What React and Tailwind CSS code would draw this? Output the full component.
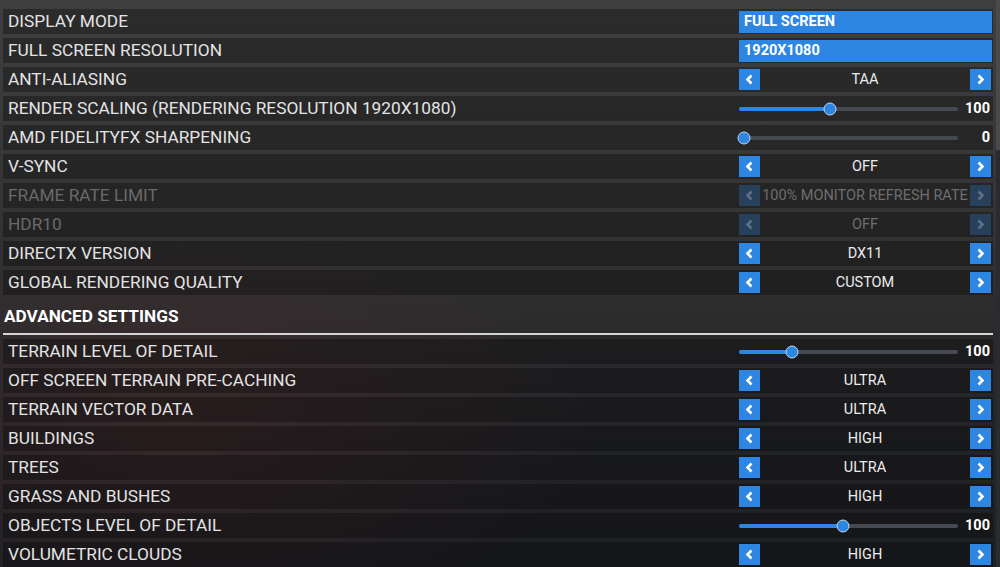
import React from "react";

const FONT = { fontFamily: "Roboto, 'Noto Sans', 'Liberation Sans', sans-serif" };

function Chevron({ dir, dim }) {
  const pts = dir === "left" ? "12.5,6.5 8.5,10.5 12.5,14.5" : "8.5,6.5 12.5,10.5 8.5,14.5";
  return (
    <svg width="21" height="21" viewBox="0 0 21 21">
      <polyline points={pts} fill="none" stroke={dim ? "#5d6f82" : "#ffffff"} strokeWidth="2.6" strokeLinejoin="miter" strokeLinecap="butt" />
    </svg>
  );
}

function ArrowControl({ value, disabled }) {
  const btn = disabled ? "bg-[#27415c]" : "bg-[#2d86e2]";
  return (
    <div className="flex items-center w-[252px] h-[21px] mr-[2px]">
      <div className={`w-[21px] h-[21px] shrink-0 ${btn}`}>
        <Chevron dir="left" dim={disabled} />
      </div>
      <div className={`flex-1 text-center text-[14.5px] leading-[21px] whitespace-nowrap overflow-visible ${disabled ? "text-[#6e6e6e]" : "text-[#ececec]"}`}>
        {value}
      </div>
      <div className={`w-[21px] h-[21px] shrink-0 ${btn}`}>
        <Chevron dir="right" dim={disabled} />
      </div>
    </div>
  );
}

function BoxControl({ value }) {
  return (
    <div className="w-[253px] h-[22px] bg-[#2d86e2] text-white font-bold text-[14.5px] leading-[22px] pl-[5px] mr-[1px]">
      {value}
    </div>
  );
}

function SliderControl({ value, thumb }) {
  return (
    <div className="flex items-center w-[253px] h-[21px] mr-[1px]">
      <div className="relative w-[219px] h-[4px] bg-[#454a52] rounded-full">
        <div className="absolute left-0 top-0 h-[4px] bg-[#2d86e2] rounded-full" style={{ width: thumb }} />
        <div
          className="absolute top-1/2 w-[13px] h-[13px] rounded-full bg-[#2d86e2] border border-[#c6d6e8] -translate-x-1/2 -translate-y-1/2"
          style={{ left: thumb }}
        />
      </div>
      <div className="flex-1 text-right text-white font-bold text-[14.5px] pr-[2px]">{value}</div>
    </div>
  );
}

function Row({ label, type, value, thumb, disabled }) {
  let control = null;
  if (type === "box") control = <BoxControl value={value} />;
  else if (type === "arrow") control = <ArrowControl value={value} disabled={disabled} />;
  else if (type === "slider") control = <SliderControl value={value} thumb={thumb} />;
  return (
    <div className="flex items-center justify-between h-[25px] bg-black/30 pl-[5px]">
      <div className={`text-[17.3px] leading-[25px] whitespace-nowrap ${disabled ? "text-[#6a6a6a]" : "text-[#e3e3e3]"}`}>{label}</div>
      {control}
    </div>
  );
}

const main = [
  { label: "DISPLAY MODE", type: "box", value: "FULL SCREEN" },
  { label: "FULL SCREEN RESOLUTION", type: "box", value: "1920X1080" },
  { label: "ANTI-ALIASING", type: "arrow", value: "TAA" },
  { label: "RENDER SCALING (RENDERING RESOLUTION 1920X1080)", type: "slider", value: "100", thumb: 91 },
  { label: "AMD FIDELITYFX SHARPENING", type: "slider", value: "0", thumb: 5 },
  { label: "V-SYNC", type: "arrow", value: "OFF" },
  { label: "FRAME RATE LIMIT", type: "arrow", value: "100% MONITOR REFRESH RATE", disabled: true },
  { label: "HDR10", type: "arrow", value: "OFF", disabled: true },
  { label: "DIRECTX VERSION", type: "arrow", value: "DX11" },
  { label: "GLOBAL RENDERING QUALITY", type: "arrow", value: "CUSTOM" },
];

const advanced = [
  { label: "TERRAIN LEVEL OF DETAIL", type: "slider", value: "100", thumb: 53 },
  { label: "OFF SCREEN TERRAIN PRE-CACHING", type: "arrow", value: "ULTRA" },
  { label: "TERRAIN VECTOR DATA", type: "arrow", value: "ULTRA" },
  { label: "BUILDINGS", type: "arrow", value: "HIGH" },
  { label: "TREES", type: "arrow", value: "ULTRA" },
  { label: "GRASS AND BUSHES", type: "arrow", value: "HIGH" },
  { label: "OBJECTS LEVEL OF DETAIL", type: "slider", value: "100", thumb: 104 },
  { label: "VOLUMETRIC CLOUDS", type: "arrow", value: "HIGH" },
];

export default function App() {
  return (
    <div
      style={FONT}
      className="relative w-[1000px] h-[567px] overflow-hidden bg-[radial-gradient(ellipse_420px_200px_at_180px_420px,rgba(80,45,45,0.45),rgba(0,0,0,0)),linear-gradient(180deg,#3f3f3f_0%,#353535_35%,#2a2a2c_60%,#222327_80%,#1f2024_100%)]"
    >
      <div className="flex">
        <div className="w-[993px] pt-[9px] pl-[3px]">
          <div className="flex flex-col gap-[4px]">
            {main.map((r) => (
              <Row key={r.label} {...r} />
            ))}
          </div>
          <div className="h-[40px] pt-[6px] flex items-center border-b-2 border-[#d4d4d4] pl-[1px] text-white font-bold text-[17.2px]">
            ADVANCED SETTINGS
          </div>
          <div className="flex flex-col gap-[4px] mt-[4px]">
            {advanced.map((r) => (
              <Row key={r.label} {...r} />
            ))}
          </div>
        </div>
        <div className="ml-[3px] w-[4px] h-[567px] bg-[#2a2b2e]">
          <div className="w-[4px] h-[150px] bg-[#4a4a4c]" />
        </div>
      </div>
    </div>
  );
}
